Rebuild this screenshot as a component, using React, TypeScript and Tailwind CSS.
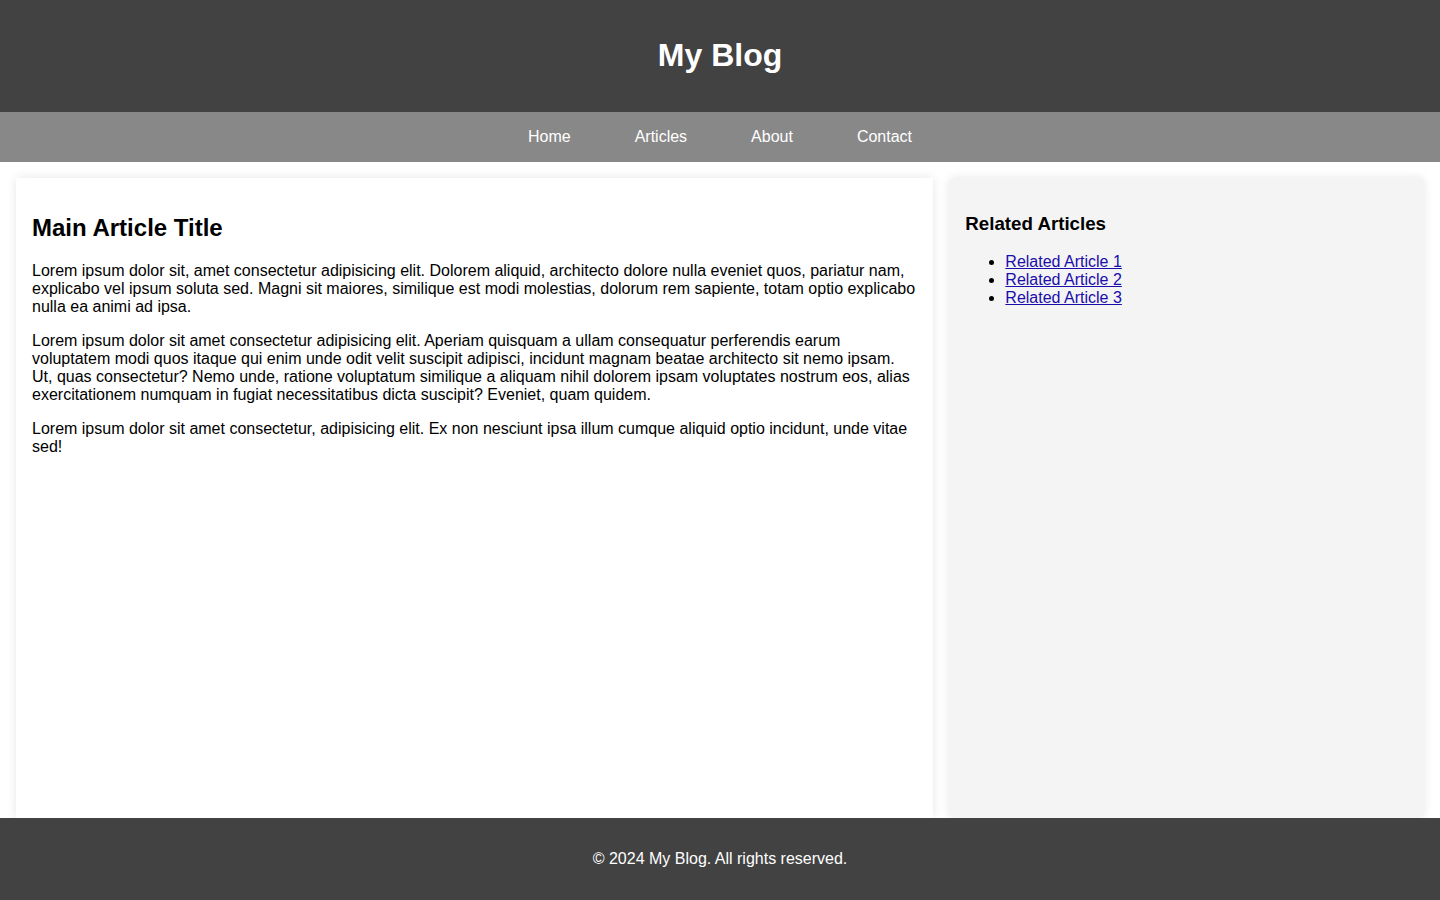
export default function App() {
  const navLinks = ['Home', 'Articles', 'About', 'Contact']
  const related = ['Related Article 1', 'Related Article 2', 'Related Article 3']

  return (
    <div className="flex min-h-screen flex-col bg-white font-['Liberation_Sans',Arial,sans-serif] text-base leading-[normal] text-black">
      {/* Header */}
      <header className="bg-[#424242] p-4 text-center text-white">
        <h1 className="my-[0.67em] text-[2em] font-bold">My Blog</h1>
      </header>

      {/* Nav */}
      <nav className="flex justify-center bg-[#888] py-4">
        {navLinks.map((link) => (
          <a key={link} href="#" className="mx-8 text-white no-underline">
            {link}
          </a>
        ))}
      </nav>

      {/* Content */}
      <main className="flex flex-1 gap-4 px-4 pt-4">
        <article className="flex-[2] bg-white p-4 shadow-[0_0_10px_rgba(0,0,0,0.1)]">
          <h2 className="mt-[0.83em] mb-[0.83em] text-[1.5em] font-bold">Main Article Title</h2>
          <p className="my-4">
            Lorem ipsum dolor sit, amet consectetur adipisicing elit. Dolorem aliquid, architecto dolore nulla eveniet quos, pariatur nam, explicabo vel ipsum soluta sed. Magni sit maiores, similique est modi molestias, dolorum rem sapiente, totam optio explicabo nulla ea animi ad ipsa.
          </p>
          <p className="my-4">
            Lorem ipsum dolor sit amet consectetur adipisicing elit. Aperiam quisquam a ullam consequatur perferendis earum voluptatem modi quos itaque qui enim unde odit velit suscipit adipisci, incidunt magnam beatae architecto sit nemo ipsam. Ut, quas consectetur? Nemo unde, ratione voluptatum similique a aliquam nihil dolorem ipsam voluptates nostrum eos, alias exercitationem numquam in fugiat necessitatibus dicta suscipit? Eveniet, quam quidem.
          </p>
          <p className="my-4">
            Lorem ipsum dolor sit amet consectetur, adipisicing elit. Ex non nesciunt ipsa illum cumque aliquid optio incidunt, unde vitae sed!
          </p>
        </article>

        <aside className="flex-[1] rounded-[5px] bg-[#f4f4f4] p-4 shadow-[0_0_10px_rgba(0,0,0,0.1)]">
          <h3 className="my-[1em] text-[1.17em] font-bold">Related Articles</h3>
          <ul className="my-4 list-disc pl-10">
            {related.map((item) => (
              <li key={item}>
                <a href="#" className="text-[#1a0dab] underline">
                  {item}
                </a>
              </li>
            ))}
          </ul>
        </aside>
      </main>

      {/* Footer */}
      <footer className="bg-[#424242] p-4 text-center text-white">
        <p className="my-4">© 2024 My Blog. All rights reserved.</p>
      </footer>
    </div>
  )
}
